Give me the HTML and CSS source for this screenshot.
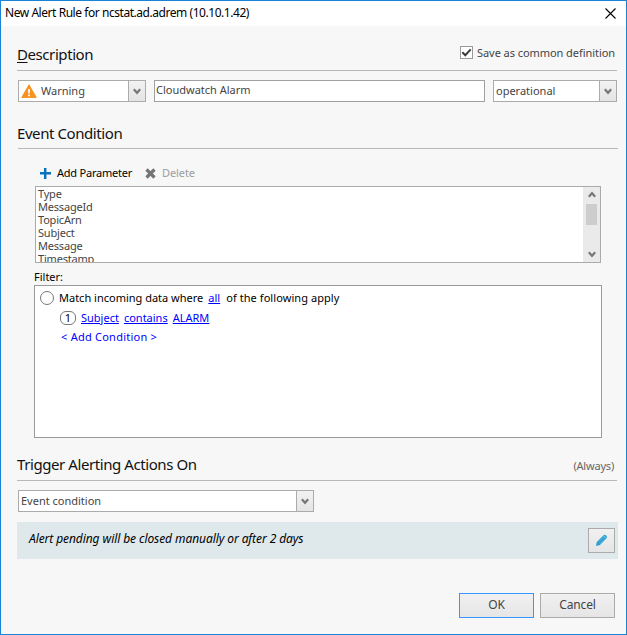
FILE: index.html
```html
<!DOCTYPE html>
<html lang="en">
<head>
    <meta charset="UTF-8">
    <meta name="viewport" content="width=device-width, initial-scale=1.0">
    <link rel="stylesheet" href="styles.css">
    <title>New Alert Rule</title>
</head>
<body>
    <div class="window">
        <div class="titlebar">
            <span class="caption">New Alert Rule for ncstat.ad.adrem (10.10.1.42)</span>
            <svg class="close" width="11" height="11" viewBox="0 0 11 11"><path d="M.5 .5l10 10M10.5 .5l-10 10" stroke="#000" stroke-width="1.1"/></svg>
        </div>

        <div class="section-head description">
            <h2><u>D</u>escription</h2>
            <label class="common">
                <span class="checkbox"><svg width="11" height="11" viewBox="0 0 11 11"><path d="M1.3 5.2l3 3L9.7 2.4" fill="none" stroke="#3c3c3c" stroke-width="2"/></svg></span>
                <span class="common-text">Save as common definition</span>
            </label>
        </div>
        <div class="fields">
            <div class="combo severity">
                <svg class="warn" width="16" height="14" viewBox="0 0 16 14"><path d="M8 .8L15.2 13.4H.8z" fill="#f7931e" stroke="#f7931e" stroke-linejoin="round"/><path d="M8 5v4.5M8 10.6v1.6" stroke="#fff" stroke-width="1.7"/></svg>
                <span class="value">Warning</span>
                <span class="arrow"><svg width="8" height="7" viewBox="0 0 8 7"><path d="M.8 1.2L4 4.8l3.2-3.6" fill="none" stroke="#777" stroke-width="2.2"/></svg></span>
            </div>
            <div class="textbox">Cloudwatch Alarm</div>
            <div class="combo state">
                <span class="value">operational</span>
                <span class="arrow"><svg width="8" height="7" viewBox="0 0 8 7"><path d="M.8 1.2L4 4.8l3.2-3.6" fill="none" stroke="#777" stroke-width="2.2"/></svg></span>
            </div>
        </div>

        <div class="section-head event">
            <h2>Event Condition</h2>
        </div>
        <div class="toolbar">
            <svg width="11" height="11" viewBox="0 0 11 11"><path d="M5.2 0v11M0 5.2h11" stroke="#0a72bc" stroke-width="2.5"/></svg>
            <span class="add">Add Parameter</span>
            <svg width="11" height="11" viewBox="0 0 11 11"><path d="M1.5 1.5l8 8M9.5 1.5l-8 8" stroke="#747474" stroke-width="3.2"/></svg>
            <span class="delete">Delete</span>
        </div>
        <div class="params">
            <ul>
                <li>Type</li>
                <li>MessageId</li>
                <li>TopicArn</li>
                <li>Subject</li>
                <li>Message</li>
                <li>Timestamp</li>
            </ul>
            <div class="scrollbar">
                <svg width="8" height="7" viewBox="0 0 8 7"><path d="M.8 5.8L4 2.2l3.2 3.6" fill="none" stroke="#777" stroke-width="2.2"/></svg>
                <div class="thumb"></div>
                <svg class="down" width="8" height="7" viewBox="0 0 8 7"><path d="M.8 1.2L4 4.8l3.2-3.6" fill="none" stroke="#777" stroke-width="2.2"/></svg>
            </div>
        </div>
        <div class="filter-label"><span>Filter:</span></div>
        <div class="filter">
            <div class="row match">
                <span class="circle"></span>
                <span>Match incoming data where</span>
                <a class="all">all</a>
                <span class="following">of the following apply</span>
            </div>
            <div class="row condition">
                <span class="num">1</span>
                <a>Subject</a>
                <a>contains</a>
                <a>ALARM</a>
            </div>
            <div class="row add-condition"><span>&lt; Add Condition &gt;</span></div>
        </div>

        <div class="section-head trigger">
            <h2>Trigger Alerting Actions On</h2>
            <span class="always">(Always)</span>
        </div>
        <div class="combo trigger-combo">
            <span class="value">Event condition</span>
            <span class="arrow"><svg width="8" height="7" viewBox="0 0 8 7"><path d="M.8 1.2L4 4.8l3.2-3.6" fill="none" stroke="#777" stroke-width="2.2"/></svg></span>
        </div>
        <div class="pending">
            <span class="pending-text">Alert pending will be closed manually or after 2 days</span>
            <div class="button edit">
                <svg width="13" height="13" viewBox="0 0 13 13"><path d="M1 12l.8-4L8.6 1.2q1.2-1 2.4.2l.4.4q1.2 1.2.2 2.4L5 11z" fill="#2b9fd3"/><path d="M3 8.6L8.4 3.2M4.6 10.1l5.4-5.4" stroke="#7cc8e8" stroke-width=".5"/><path d="M8.6 1.9l2.5 2.5" stroke="#d3edf7" stroke-width=".6"/></svg>
            </div>
        </div>
        <div class="buttons">
            <div class="button ok"><span>OK</span></div>
            <div class="button cancel"><span>Cancel</span></div>
        </div>
    </div>
</body>
</html>
```
FILE: styles.css
```css
* {
    box-sizing: border-box;
}
body {
    margin: 0;
    font-family: "Noto Sans", "Open Sans", sans-serif;
    font-size: 11px;
    line-height: 14px;
    color: #444;
    white-space: nowrap;
}
svg {
    display: block;
    flex: none;
}
.window {
    width: 627px;
    height: 635px;
    border: 1px solid #1883d7;
    background: #f7f7f7;
    overflow: hidden;
}
.titlebar {
    display: flex;
    justify-content: space-between;
    height: 25px;
    padding: 5px 10px 0 4px;
    background: #fff;
    color: #000;
    font-size: 12px;
    letter-spacing: -0.45px;
}
.close {
    margin-top: 2px;
}

/* section headings */
.section-head {
    display: flex;
    justify-content: space-between;
    width: 600px;
    margin-left: 16px;
    border-bottom: 1px solid #b9b9b9;
}
h2 {
    margin: 0;
    color: #111;
    font-size: 15px;
    font-weight: 400;
    line-height: 20px;
    letter-spacing: -0.42px;
}
h2 u {
    text-underline-offset: 2px;
}
.description {
    height: 45px;
    padding-top: 18px;
}
.common {
    display: flex;
    gap: 4px;
    margin: 2px 2px 0 0;
    letter-spacing: -0.06px;
}
.checkbox {
    width: 13px;
    height: 13px;
    border: 1px solid #9a9a9a;
    background: #fff;
}

.fields {
    display: flex;
    gap: 8px;
    margin: 9px 0 0 17px;
}
.combo {
    display: flex;
    height: 22px;
    border: 1px solid #ababab;
    background: #fff;
}
.value {
    flex: 1;
    padding: 3px 0 0 2px;
}
.arrow {
    display: flex;
    align-items: center;
    justify-content: center;
    width: 17px;
    border-left: 1px solid #ababab;
    background: linear-gradient(#f2f2f2, #e4e4e4);
}
.severity {
    width: 128px;
}
.warn {
    margin: 3px 0 0 2px;
}
.severity .value {
    padding-left: 4px;
}
.textbox {
    width: 331px;
    height: 22px;
    padding: 2px 0 0 1px;
    border: 1px solid #a0a0a0;
    background: #fff;
}
.state {
    width: 124px;
}

.event {
    height: 47px;
    margin-left: 17px;
    padding-top: 21px;
}
.event h2 {
    margin-left: -1px;
}
.toolbar {
    display: flex;
    align-items: center;
    height: 37px;
    padding: 11px 0 0 39px;
    color: #000;
}
.toolbar span {
    margin-left: 6px;
}
.toolbar .add {
    width: 76px;
    margin-right: 12px;
    letter-spacing: -0.22px;
}
.toolbar .delete {
    color: #9d9d9d;
    letter-spacing: -0.1px;
}

/* parameter list */
.params {
    display: flex;
    width: 566px;
    height: 77px;
    margin-left: 34px;
    border: 1px solid #ababab;
    background: #fff;
    overflow: hidden;
}
ul {
    flex: 1;
    margin: 0;
    padding: 0 0 0 2px;
    list-style: none;
    letter-spacing: -0.2px;
}
li {
    height: 13px;
    line-height: 13px;
}
.scrollbar {
    display: flex;
    flex-direction: column;
    align-items: center;
    width: 17px;
    padding: 4px 0;
    background: #eaeaea;
}
.thumb {
    width: 11px;
    height: 21px;
    margin-top: 6px;
    background: #cdcdcd;
}
.down {
    margin-top: auto;
}

.filter-label {
    height: 22px;
    padding: 7px 0 0 33px;
    color: #000;
}
.filter {
    width: 568px;
    height: 153px;
    margin-left: 33px;
    padding: 5px;
    border: 1px solid #9a9a9a;
    background: #fff;
    color: #000;
}
.row {
    display: flex;
    height: 20px;
}
.circle {
    width: 14px;
    height: 14px;
    margin-right: 5px;
    border: 1px solid #777;
    border-radius: 7px;
}
.row a {
    color: #0000ff;
    text-decoration: underline;
    text-underline-offset: 1px;
}
.row .all {
    margin: 0 6px 0 5px;
}
.following {
    letter-spacing: 0.07px;
}
.condition {
    padding-left: 20px;
    gap: 5px;
}
.num {
    width: 16px;
    height: 14px;
    border: 1px solid #777;
    border-radius: 6px;
    line-height: 12px;
    text-align: center;
}
.add-condition {
    padding-left: 21px;
    color: #0000ff;
    line-height: 12px;
    letter-spacing: 0.24px;
}

.trigger {
    height: 43px;
    padding-top: 16px;
}
.always {
    margin: 5px 3px 0 0;
    color: #666;
    letter-spacing: -0.2px;
}
.trigger-combo {
    width: 296px;
    margin: 9px 0 0 17px;
}
.pending {
    display: flex;
    justify-content: space-between;
    width: 601px;
    height: 37px;
    margin: 10px 0 0 16px;
    padding: 6px 3px 0 12px;
    background: #dfe8eb;
}
.pending-text {
    margin-top: 4px;
    color: #000;
    font-size: 12px;
    font-style: italic;
    letter-spacing: -0.08px;
}
.button {
    display: flex;
    align-items: center;
    justify-content: center;
    height: 25px;
    border: 1px solid #ababab;
    background: linear-gradient(#f1f1f1, #e5e5e5);
    font-size: 12px;
    letter-spacing: -0.15px;
}
.edit {
    width: 27px;
}
.buttons {
    display: flex;
    justify-content: flex-end;
    gap: 6px;
    margin: 34px 11px 0 0;
}
.ok, .cancel {
    width: 75px;
    padding-bottom: 1px;
}
.ok {
    border-color: #3399ff;
}
```
